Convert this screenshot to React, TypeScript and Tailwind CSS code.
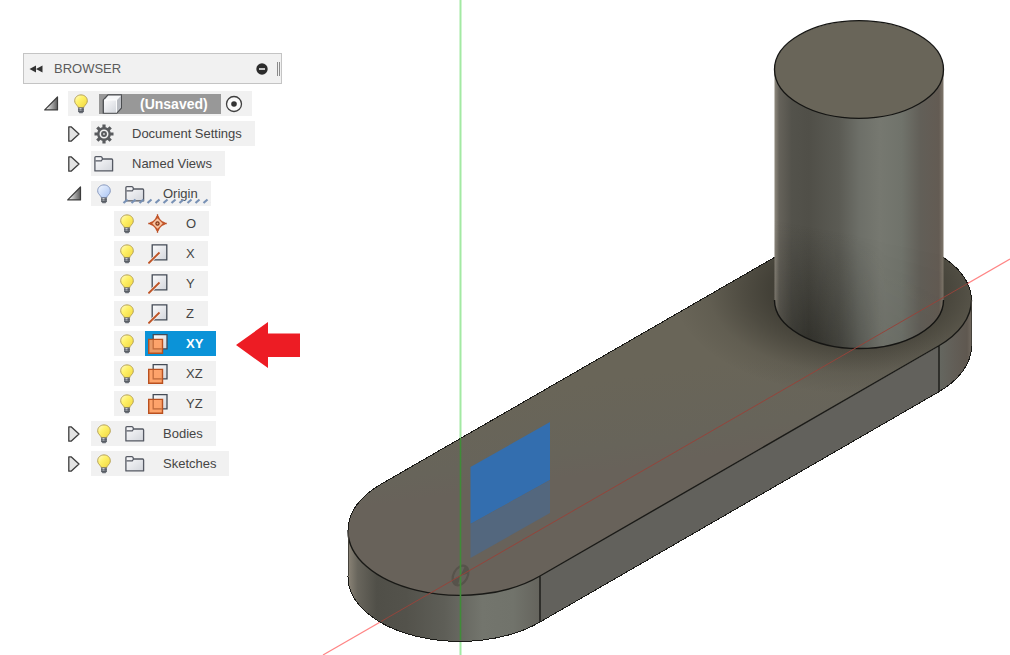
import { useState, type ReactNode } from "react";

function Bulb({ lit }: { lit: boolean }) {
  const glass = lit ? "url(#bulb-lit)" : "url(#bulb-off)";
  const rim = lit ? "#b5a052" : "#8496bd";
  return (
    <svg className="h-5 w-4" viewBox="0 0 16 20" aria-hidden="true">
      <path
        d="M8 .9C4.300.9 1.700 3.500 1.700 6.700c0 2.400 1.300 3.700 2.400 4.700.7.7.9 1.200 1 2.100h5.800c.1-.9.3-1.400 1-2.100 1.100-1 2.400-2.300 2.400-4.700C14.300 3.500 11.700.9 8 .9z"
        fill={glass}
        stroke={rim}
        strokeWidth="1"
      />
      <path d="M5.100 13.500h5.800v3.700L9.600 19.200H6.400l-1.300-2z" fill="#6c7078" />
      <path d="M6.500 14.100h2v2.400h-2z" fill="#d5d8dc" />
      <path d="M5.100 15.700h5.800M5.400 17.500h5.200" stroke="#50545c" strokeWidth=".7" />
    </svg>
  );
}

function Cube() {
  return (
    <svg className="size-5" viewBox="0 0 20 20" aria-hidden="true">
      <path d="M1.300 6 6 .9h13.400V14l-4.900 5.200H1.300z" fill="#f6f7f8" stroke="#4b4d50" strokeWidth="1.300" strokeLinejoin="round" />
      <path d="M14.500 6 18.800 1.500V13.800l-4.300 4.700z" fill="#b9bcc2" />
      <path d="M2 6H14.500V18.500H2z" fill="url(#face)" />
      <path d="M2 6h12.500L18.500 1.800M14.500 6v12.500" fill="none" stroke="#fff" strokeWidth=".9" />
    </svg>
  );
}

function Gear() {
  return (
    <svg className="size-5" viewBox="0 0 20 20" aria-hidden="true">
      <g stroke="#595b5e" strokeWidth="3.200">
        <path d="M10 .5v4M10 15.500v4M.5 10h4M15.500 10h4M3.300 3.300l2.900 2.900M13.800 13.800l2.900 2.900M3.300 16.700l2.900-2.900M13.800 6.200l2.900-2.900" />
      </g>
      <circle cx="10" cy="10" r="5.700" fill="#f1f1f1" stroke="#595b5e" strokeWidth="2.400" />
      <circle cx="10" cy="10" r="2" fill="#c9cacb" stroke="#595b5e" strokeWidth="1.900" />
    </svg>
  );
}

function Folder() {
  return (
    <svg className="size-5" viewBox="0 0 20 20" aria-hidden="true">
      <path d="M.9 16.900V3.600q0-1 1-1h5q1 0 1.200 1l.4 1.400h9.100q1 0 1 1v10.900z" fill="url(#face)" stroke="#555963" strokeWidth="1.300" strokeLinejoin="round" />
      <path d="M1.500 6.800h5.800l1.300-1.800" fill="none" stroke="#555963" strokeWidth="1.200" />
    </svg>
  );
}

function OriginPoint() {
  return (
    <svg className="size-5" viewBox="0 0 20 20" aria-hidden="true">
      <path d="M9.500.3v18.400M.3 9.500h18.400" stroke="#b8481d" strokeWidth="1.300" />
      <path d="M9.500 3.200Q11 8 15.800 9.500 11 11 9.500 15.800 8 11 3.200 9.500 8 8 9.500 3.200z" fill="#f8c4a0" stroke="#c2562a" strokeWidth="3" strokeLinejoin="round" />
      <path d="M9.500 4.300 14.700 9.500l-5.200 5.200-5.200-5.200z" fill="#f9c5a2" />
      <circle cx="9.500" cy="9.500" r="1.600" fill="#f3a777" stroke="#7b3317" strokeWidth="1.200" />
    </svg>
  );
}

function Axis() {
  return (
    <svg className="size-5" viewBox="0 0 20 20" aria-hidden="true">
      <path d="M4.200.8h14.600v15H4.200z" fill="url(#face)" stroke="#434a55" strokeWidth="1.300" />
      <path d="M.4 19.400 11.500 8.500" stroke="#f6f1ee" strokeWidth="3.200" />
      <path d="M.4 19.400 11.500 8.500" stroke="#bd5325" strokeWidth="1.900" />
    </svg>
  );
}

function Plane() {
  return (
    <svg className="size-5" viewBox="0 0 20 20" aria-hidden="true">
      <path d="M5.200.7h13.800v14.200H5.200z" fill="url(#face)" stroke="#434a55" strokeWidth="1.300" />
      <path d="M.7 5.400h13.800v13.800H.7z" fill="#ff9b5c" fillOpacity=".9" stroke="#b9501f" strokeWidth="1.400" />
      <path d="M5.200 6.100v8.800h8.600" fill="none" stroke="#c06c3d" strokeWidth="1.200" />
    </svg>
  );
}

function Toggle({ name, open, onClick }: { name: string; open: boolean; onClick: () => void }) {
  return (
    <button type="button" aria-label={name} aria-expanded={open} onClick={onClick} className="flex h-6 w-6 items-center">
      {open ? (
        <svg className="size-4" viewBox="0 0 16 16" aria-hidden="true">
          <path d="M13.500 1v12.900H.7z" fill="url(#wedge)" stroke="#3c3c3c" strokeWidth="1.200" strokeLinejoin="round" />
        </svg>
      ) : (
        <svg className="h-4 w-3.5" viewBox="0 0 14 16" aria-hidden="true">
          <path d="M1.800.800h2.300L12 8 4.100 15.200H1.800z" fill="#e3e3e3" stroke="#3c3c3c" strokeWidth="1.300" strokeLinejoin="round" />
        </svg>
      )}
    </button>
  );
}

function RedArrow() {
  return (
    <svg className="absolute left-full top-1/2 ml-5 h-12 w-16 -translate-y-1/2" viewBox="0 0 64 48" aria-hidden="true">
      <path d="M0 25 32 2v11.500h32v23.500H32V48z" fill="#ed1c24" />
    </svg>
  );
}

type NodeProps = {
  label: string;
  icon: ReactNode;
  bulb?: "on" | "off";
  open?: boolean;
  look?: "plain" | "root" | "selected" | "hatched";
  children?: ReactNode;
  leaf?: boolean;
};

const looks = {
  plain: "h-full text-[13px] text-[#454545]",
  root: "h-5 bg-[#989898] text-sm font-bold text-white",
  selected: "h-full bg-[#0b93d8] text-[13px] font-bold text-white",
  hatched: "h-full text-[13px] text-[#454545]",
};

function TreeNode({ label, icon, bulb, open = false, look = "plain", children, leaf = false }: NodeProps) {
  const [expanded, setExpanded] = useState(open);
  const [lit, setLit] = useState(bulb === "on");
  return (
    <li>
      <div className="mb-[5px] flex h-[25px] items-center">
        {leaf ? <span className="w-6" /> : <Toggle name={label} open={expanded} onClick={() => setExpanded(!expanded)} />}
        <div className="relative flex h-full items-center bg-[#f1f1f1]">
          {bulb && (
            <button type="button" aria-label={"Visibility of " + label} aria-pressed={lit} onClick={() => setLit(!lit)} className="flex w-[31px] pl-[5px]">
              <Bulb lit={lit} />
            </button>
          )}
          <button type="button" className={"relative flex min-w-[63px] items-center gap-[18px] whitespace-nowrap pl-[3px] pr-[13px] " + looks[look]}>
            {icon}
            <span>{label}</span>
            {look === "hatched" && (
              <svg className="absolute bottom-0.5 left-0 h-1.5 w-full" aria-hidden="true">
                <rect width="100%" height="6" fill="url(#hatch)" />
              </svg>
            )}
          </button>
          {look === "root" && (
            <label className="flex w-[31px] pl-1">
              <input type="radio" name="active" aria-label="Activate component" defaultChecked className="peer sr-only" />
              <svg className="size-[18px]" viewBox="0 0 18 18" aria-hidden="true">
                <circle cx="9" cy="9" r="7.500" fill="#fafafa" stroke="#3f3f3f" strokeWidth="1.300" />
                <circle cx="9" cy="9" r="2.800" fill="#333" />
              </svg>
            </label>
          )}
          {look === "selected" && <RedArrow />}
        </div>
      </div>
      {children && expanded && <ul className="ml-[23px]">{children}</ul>}
    </li>
  );
}

const plateTop =
  "M380.500 484.500 779.500 254.500A112.500 65 0 0 1 859 235A112.500 65 0 0 1 971.500 300A112.500 65 0 0 1 938.500 346L540 576A112 64.500 0 0 1 348 530A112 64.500 0 0 1 380.500 484.500z";

function Model() {
  return (
    <svg className="absolute inset-0 h-full w-full" viewBox="0 0 1010 655" preserveAspectRatio="xMidYMid slice" role="img" aria-label="Model view">
      <defs>
        <linearGradient id="bulb-lit" x1="0" y1="0" x2="1" y2="1">
          <stop offset="0" stopColor="#fffbd0" />
          <stop offset=".4" stopColor="#fff26a" />
          <stop offset="1" stopColor="#f0d53c" />
        </linearGradient>
        <linearGradient id="bulb-off" x1="0" y1="0" x2="1" y2="1">
          <stop offset="0" stopColor="#f2f7ff" />
          <stop offset="1" stopColor="#a9c4f4" />
        </linearGradient>
        <linearGradient id="face" x1="0" y1="0" x2="1" y2="1">
          <stop offset="0" stopColor="#fbfbfc" />
          <stop offset="1" stopColor="#d3d6dc" />
        </linearGradient>
        <linearGradient id="wedge" x1="0" y1="0" x2="1" y2="0">
          <stop offset=".1" stopColor="#f4f4f4" />
          <stop offset="1" stopColor="#5c5c5c" />
        </linearGradient>
        <pattern id="hatch" width="8" height="6" patternUnits="userSpaceOnUse">
          <path d="M1.500 5 5.500 1.500" stroke="#7891b5" strokeWidth="2.200" />
        </pattern>
        <linearGradient id="top" gradientUnits="userSpaceOnUse" x1="600" y1="380" x2="618" y2="500">
          <stop offset="0" stopColor="#696558" />
          <stop offset=".55" stopColor="#67645a" />
          <stop offset=".75" stopColor="#68625a" />
          <stop offset="1" stopColor="#68625a" />
        </linearGradient>
        <linearGradient id="end" gradientUnits="userSpaceOnUse" x1="348" y1="0" x2="540" y2="0">
          <stop offset="0" stopColor="#8b8477" />
          <stop offset=".05" stopColor="#68655c" />
          <stop offset=".15" stopColor="#504f48" />
          <stop offset=".3" stopColor="#53524b" />
          <stop offset=".5" stopColor="#5e5e57" />
          <stop offset=".7" stopColor="#73756d" />
          <stop offset=".86" stopColor="#71736b" />
          <stop offset="1" stopColor="#65645d" />
        </linearGradient>
        <linearGradient id="tip" gradientUnits="userSpaceOnUse" x1="939" y1="0" x2="972" y2="0">
          <stop offset="0" stopColor="#656760" />
          <stop offset=".45" stopColor="#625e57" />
          <stop offset=".85" stopColor="#5f5850" />
          <stop offset="1" stopColor="#736b61" />
        </linearGradient>
        <linearGradient id="pillar" gradientUnits="userSpaceOnUse" x1="775" y1="0" x2="944" y2="0">
          <stop offset="0" stopColor="#8a857a" />
          <stop offset=".025" stopColor="#65625a" />
          <stop offset=".1" stopColor="#53524b" />
          <stop offset=".2" stopColor="#504f48" />
          <stop offset=".38" stopColor="#5b5b54" />
          <stop offset=".5" stopColor="#6d6f68" />
          <stop offset=".62" stopColor="#767870" />
          <stop offset=".75" stopColor="#70736b" />
          <stop offset=".86" stopColor="#625f58" />
          <stop offset=".97" stopColor="#635b53" />
          <stop offset="1" stopColor="#81796d" />
        </linearGradient>
        <linearGradient id="shade" gradientUnits="userSpaceOnUse" x1="835" y1="345" x2="855" y2="235">
          <stop offset="0" stopColor="#141410" stopOpacity=".5" />
          <stop offset="1" stopColor="#141410" stopOpacity="0" />
        </linearGradient>
        <linearGradient id="shade-fade" gradientUnits="userSpaceOnUse" x1="775" y1="0" x2="944" y2="0">
          <stop offset="0" stopColor="#fff" stopOpacity=".5" />
          <stop offset=".2" stopColor="#fff" />
          <stop offset=".45" stopColor="#fff" stopOpacity=".6" />
          <stop offset=".65" stopColor="#fff" stopOpacity=".15" />
          <stop offset="1" stopColor="#fff" stopOpacity=".1" />
        </linearGradient>
        <mask id="shade-mask" maskUnits="userSpaceOnUse" x="770" y="200" width="180" height="160">
          <rect x="770" y="200" width="180" height="160" fill="url(#shade-fade)" />
        </mask>
        <radialGradient id="contact" gradientUnits="userSpaceOnUse" cx="0" cy="0" r="1" gradientTransform="translate(852 290) scale(180 104)">
          <stop offset=".45" stopColor="#1c1b16" stopOpacity=".5" />
          <stop offset=".6" stopColor="#1c1b16" stopOpacity=".34" />
          <stop offset=".8" stopColor="#1c1b16" stopOpacity=".1" />
          <stop offset="1" stopColor="#1c1b16" stopOpacity="0" />
        </radialGradient>
      </defs>

      <path d="M460.500 0V655" stroke="#a3e9a3" strokeWidth="2" />
      <path d="M323 655 1010 259" stroke="#ff8585" strokeWidth="1.200" />

      <path d="M348 530v46A112 64.500 0 0 0 540 622V576L460 480z" fill="url(#end)" />
      <path d="M540 576 939 346v46L540 622z" fill="#62615c" />
      <path d="M938.500 346v46A112.500 65 0 0 0 971.500 346v-46z" fill="url(#tip)" />
      <path d={plateTop} fill="url(#top)" />
      <path d={plateTop} fill="url(#contact)" />
      <g fill="none" stroke="#191916">
        <path d="M348 530A112 64.500 0 0 0 540 576L938.500 346A112.500 65 0 0 0 971.500 300M540 576v46M939 346v46" strokeWidth="1.400" />
        <path d="M348 530A112 64.500 0 0 1 380.500 484.500L779.500 254.500M938.500 254.500A112.500 65 0 0 1 971.500 300M971.500 346A112.500 65 0 0 1 938.500 392L540 622A112 64.500 0 0 1 348 576" shapeRendering="crispEdges" strokeWidth="1" />
        <path d="M971.500 300v46M348.500 530v46" stroke="#45423b" strokeWidth="1" />
      </g>

      <path d="M774.500 69v231a84.500 48.500 0 0 0 169 0V69z" fill="url(#pillar)" />
      <path d="M774.500 200v100a84.500 48.500 0 0 0 169 0V200z" fill="url(#shade)" mask="url(#shade-mask)" />
      <path d="M774.500 300a84.500 48.500 0 0 0 169 0" fill="none" stroke="#151513" strokeWidth="1.400" />
      <ellipse cx="859" cy="69.500" rx="84.500" ry="48.800" fill="#696559" stroke="#151513" strokeWidth="1.300" />

      <ellipse cx="460.500" cy="575.500" rx="7" ry="10.500" transform="rotate(28 460.500 575.500)" fill="#66615a" stroke="#57534b" strokeWidth="2.200" />
      <path d="M460.500 575.500 465 566c3 1 4 4 2 8zM460.500 575.500 454 579c-1 4 1 6 4 6z" fill="#57534b" />
      <path d="m470.500 467 79.500-45v58l-79.500 44z" fill="#336eaf" />
      <path d="m470.500 524 79.500-44v33l-79.500 45z" fill="#53677e" />
      <path d="M460.500 438V640" stroke="#3f8c38" strokeWidth="1.600" />
      <path d="M381 621.500 968.500 283" stroke="#94443b" strokeWidth="1" />
    </svg>
  );
}

export default function App() {
  return (
    <main className="relative min-h-screen overflow-hidden bg-white pl-[23px] pt-[53px] font-['Liberation_Sans',Arial,sans-serif]">
      <Model />
      <aside className="relative w-[259px]">
        <header className="flex h-[31px] items-center border border-[#c4c4c4] bg-[#f1f1f1] pl-[5px] text-[#5b5b5b]">
          <button type="button" aria-label="Collapse browser" className="w-[25px]">
            <svg className="h-2 w-3.5" viewBox="0 0 14 8" aria-hidden="true">
              <path d="M7 .500v7L.500 4zM13.500.500v7L7 4z" fill="#333" />
            </svg>
          </button>
          <h1 className="flex-1 text-[13px]">BROWSER</h1>
          <button type="button" aria-label="Minimize" className="mr-[9px]">
            <svg className="size-3" viewBox="0 0 12 12" aria-hidden="true">
              <circle cx="6" cy="6" r="5.700" fill="#2c2c2c" />
              <path d="M3 6h6" stroke="#eee" strokeWidth="1.600" />
            </svg>
          </button>
          <span className="mr-px h-3.5 w-[3px] border-x border-[#8b8b8b]" />
        </header>
        <ul className="ml-[21px] pt-[7px]">
          <TreeNode label="(Unsaved)" icon={<Cube />} bulb="on" look="root" open>
            <TreeNode label="Document Settings" icon={<Gear />} />
            <TreeNode label="Named Views" icon={<Folder />} />
            <TreeNode label="Origin" icon={<Folder />} bulb="off" look="hatched" open>
              <TreeNode leaf label="O" icon={<OriginPoint />} bulb="on" />
              <TreeNode leaf label="X" icon={<Axis />} bulb="on" />
              <TreeNode leaf label="Y" icon={<Axis />} bulb="on" />
              <TreeNode leaf label="Z" icon={<Axis />} bulb="on" />
              <TreeNode leaf label="XY" icon={<Plane />} bulb="on" look="selected" />
              <TreeNode leaf label="XZ" icon={<Plane />} bulb="on" />
              <TreeNode leaf label="YZ" icon={<Plane />} bulb="on" />
            </TreeNode>
            <TreeNode label="Bodies" icon={<Folder />} bulb="on" />
            <TreeNode label="Sketches" icon={<Folder />} bulb="on" />
          </TreeNode>
        </ul>
      </aside>
    </main>
  );
}
